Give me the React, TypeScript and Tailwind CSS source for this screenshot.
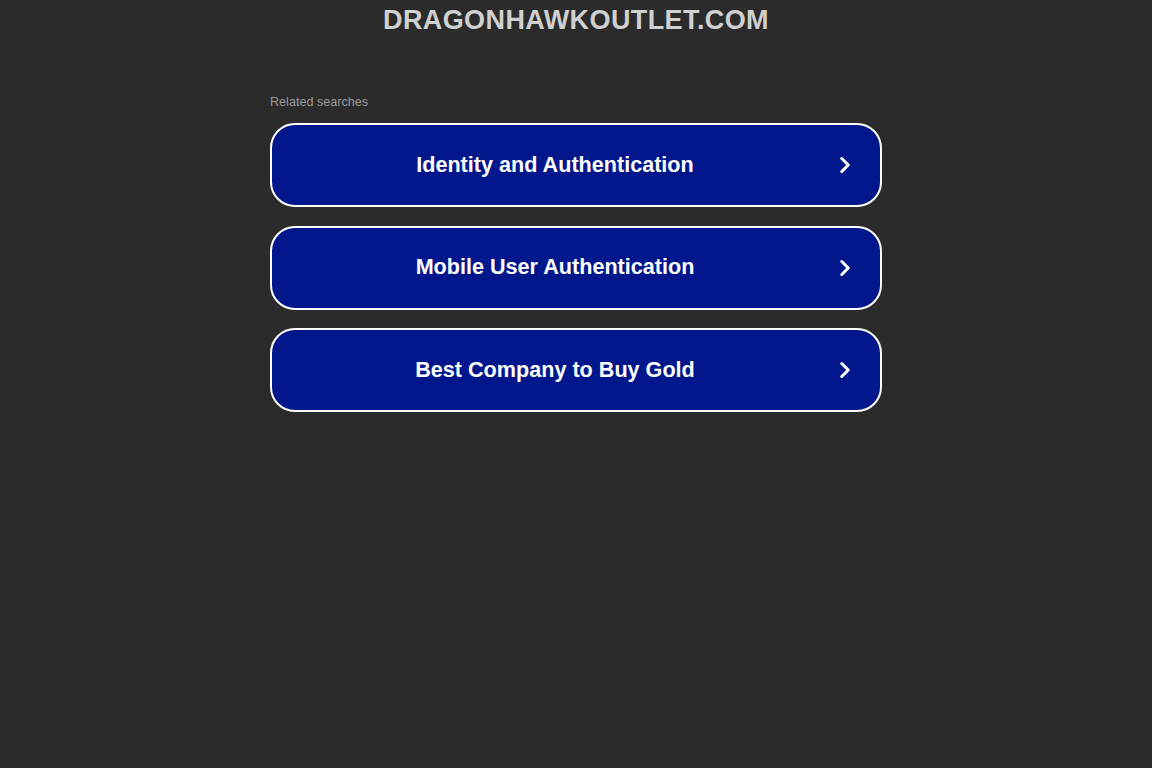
import { ChevronRight } from 'lucide-react';

const links = ['Identity and Authentication', 'Mobile User Authentication', 'Best Company to Buy Gold'];

export default function App() {
  return (
    <div className="min-h-screen bg-[#2b2b2b] font-['Liberation_Sans',Arial,sans-serif]">
      <div className="flex justify-center pt-[4px]">
        <h1 className="text-[27px] leading-[32px] font-bold tracking-[0.4px] text-[#d0d0d0]">DRAGONHAWKOUTLET.COM</h1>
      </div>

      <div className="mx-auto mt-[59px] w-[612px]">
        <p className="text-[12.6px] leading-[15px] text-[#9a9a9a]">Related searches</p>
        <div className="mt-[13px] flex flex-col gap-[18.5px]">
          {links.map(l => (
            <a
              key={l}
              href="#"
              className="flex h-[84px] items-center rounded-[25px] border-2 border-white bg-[#03178c] text-white"
            >
              <span className="flex-1 pl-[6px] text-center text-[21.6px] font-bold">{l}</span>
              <ChevronRight className="mr-[22px] h-[26px] w-[26px]" strokeWidth={2.8} />
            </a>
          ))}
        </div>
      </div>
    </div>
  );
}
